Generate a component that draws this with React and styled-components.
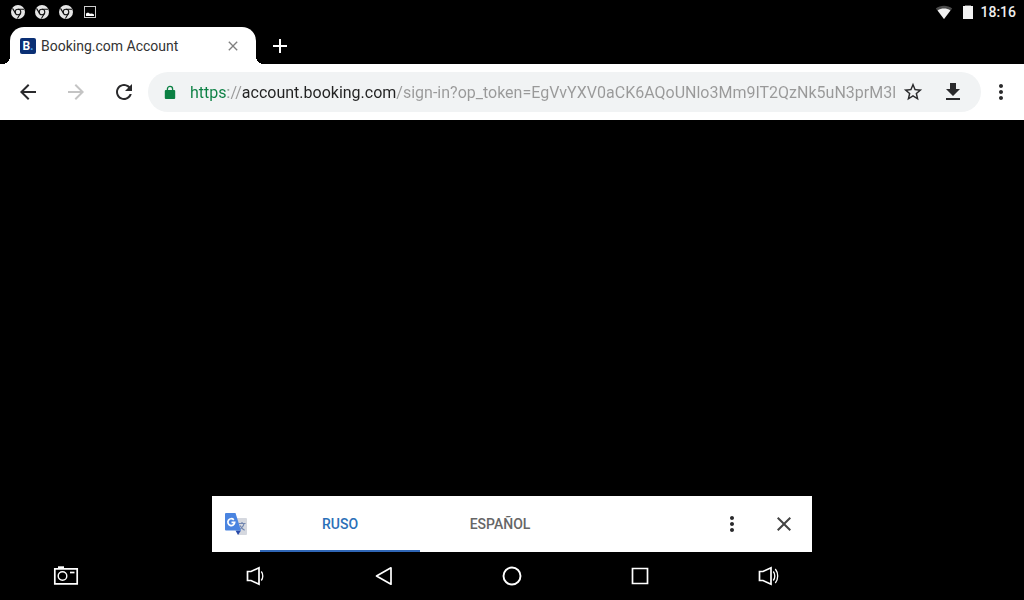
import { useState } from "react";
import styled, { createGlobalStyle } from "styled-components";

const URL_TEXT =
  "https://account.booking.com/sign-in?op_token=EgVvYXV0aCK6AQoUNlo3Mm9IT2QzNk5uN3prM3lpSk";

const icons = {
  back: "M20 11H7.83l5.59-5.59L12 4l-8 8 8 8 1.41-1.41L7.83 13H20v-2z",
  forward: "M12 4l-1.41 1.41L16.17 11H4v2h12.17l-5.58 5.59L12 20l8-8z",
  refresh:
    "M17.65 6.35C16.2 4.9 14.21 4 12 4c-4.42 0-7.99 3.58-7.99 8s3.57 8 7.99 8c3.73 0 6.84-2.55 7.73-6h-2.08c-.82 2.33-3.04 4-5.65 4-3.31 0-6-2.69-6-6s2.69-6 6-6c1.66 0 3.14.69 4.22 1.78L13 11h7V4l-2.35 2.35z",
  star: "M22 9.24l-7.19-.62L12 2 9.19 8.63 2 9.24l5.46 4.73L5.82 21 12 17.27 18.18 21l-1.63-7.03L22 9.24zM12 15.4l-3.76 2.27 1-4.28-3.32-2.88 4.38-.38L12 6.1l1.71 4.04 4.38.38-3.32 2.88 1 4.28L12 15.4z",
  download: "M19 9h-4V3H9v6H5l7 7 7-7zM5 18v2h14v-2H5z",
  more: "M12 8c1.1 0 2-.9 2-2s-.9-2-2-2-2 .9-2 2 .9 2 2 2zm0 2c-1.1 0-2 .9-2 2s.9 2 2 2 2-.9 2-2-.9-2-2-2zm0 6c-1.1 0-2 .9-2 2s.9 2 2 2 2-.9 2-2-.9-2-2-2z",
  close:
    "M19 6.41L17.59 5 12 10.59 6.41 5 5 6.41 10.59 12 5 17.59 6.41 19 12 13.41 17.59 19 19 17.59 13.41 12z",
  add: "M19 13h-6v6h-2v-6H5v-2h6V5h2v6h6v2z",
};

function Icon({ name, size = 24 }) {
  return (
    <svg width={size} height={size} viewBox="0 0 24 24" fill="currentColor" aria-hidden="true">
      <path d={icons[name]} />
    </svg>
  );
}

function ChromeIcon() {
  return (
    <svg width="14" height="14" viewBox="0 0 14 14" aria-hidden="true">
      <circle cx="7" cy="7" r="7" fill="#e6e6e6" />
      <g fill="none" stroke="#111" strokeWidth="1.1">
        <circle cx="7" cy="7" r="2.8" />
        <path d="M7 4.2h6M4.6 8.4 1.5 3.4M9.4 8.4 6.4 13.6" />
      </g>
    </svg>
  );
}

function PictureIcon() {
  return (
    <svg width="14" height="14" viewBox="0 0 14 14" aria-hidden="true">
      <rect x="1.5" y="1.5" width="11" height="11" fill="none" stroke="#ccc" />
      <path d="M3 11V8.6L5 7.4l2 1.3 2-.3 2 1V11z" fill="#fff" />
    </svg>
  );
}

function WifiIcon() {
  return (
    <svg width="18" height="14" viewBox="0 0 18 14" aria-hidden="true">
      <path d="M9 14 .8 3.4C5.4 0 12.6 0 17.2 3.4z" fill="#4a4a4a" />
      <path d="M9 14 2.6 5.4C6.2 3 11.8 3 15.4 5.4z" fill="#f2f2f2" />
    </svg>
  );
}

function BatteryIcon() {
  return (
    <svg width="10" height="14" viewBox="0 0 10 14" aria-hidden="true">
      <path d="M2 0h6v1H2z" fill="#666" />
      <path d="M0 1h10v13H0z" fill="#f2f2f2" />
    </svg>
  );
}

function LockIcon() {
  return (
    <svg width="12" height="14" viewBox="0 0 12 14" aria-hidden="true">
      <path d="M3.4 6V4a2.6 2.6 0 0 1 5.2 0v2" fill="none" stroke="#0b8043" strokeWidth="1.3" />
      <rect x=".8" y="5" width="10.4" height="9" rx="1" fill="#0b8043" />
    </svg>
  );
}

function TranslateLogo() {
  return (
    <svg width="24" height="24" viewBox="0 0 24 24" aria-hidden="true">
      <path d="M10 6h12a1 1 0 0 1 1 1v15a1 1 0 0 1-1 1h-8z" fill="#d5d8df" />
      <path
        d="M14.5 11.5h7M18 10v1.5M20 11.5c-.6 3-2.6 5-5 6.2M16 13.5c1 2 2.6 3.6 4.6 4.7"
        fill="none"
        stroke="#7286b0"
        strokeWidth="1.2"
      />
      <path d="M11.5 18.5H17L14 23z" fill="#2748a8" />
      <path d="M2 1h9.5L17 18.5H2a1 1 0 0 1-1-1V2a1 1 0 0 1 1-1z" fill="#4a84e0" />
      <path d="M9.8 7.8A3.4 3.4 0 1 0 10.7 10.4H7.5" fill="none" stroke="#fff" strokeWidth="1.7" />
    </svg>
  );
}

function NavIcon({ name }) {
  return (
    <svg width="26" height="24" viewBox="0 0 26 24" fill="none" stroke="#fff" strokeWidth="1.7" aria-hidden="true">
      {name === "camera" && (
        <>
          <path d="M1.8 4.8h22.4v15H1.8z" />
          <path d="M5 3.3h6" strokeWidth="2" />
          <circle cx="9.5" cy="12" r="4.3" strokeWidth="1.4" />
          <path d="M17 8.5h4.5" />
        </>
      )}
      {(name === "volumeDown" || name === "volumeUp") && (
        <>
          <path d="M4.5 7.5H8L16 3.8v16.4L8 16.5H4.5z" />
          <path d="M18.3 7.5c2 2.5 2 6.5 0 9" strokeWidth="1.3" />
        </>
      )}
      {name === "volumeUp" && <path d="M20.3 5c3.2 4 3.2 10 0 14" strokeWidth="1.3" />}
      {name === "back" && <path d="M5.5 12 20 3.8v16.4z" strokeLinejoin="round" />}
      {name === "home" && <circle cx="13" cy="12" r="8.5" strokeWidth="1.9" />}
      {name === "recent" && <path d="M5.5 4.5h15v15h-15z" />}
    </svg>
  );
}

export default function App() {
  const [url, setUrl] = useState(URL_TEXT);
  const [language, setLanguage] = useState("ruso");

  return (
    <>
      <GlobalStyle />
      <Screen>
        <StatusBar>
          <Notifications>
            <ChromeIcon />
            <ChromeIcon />
            <ChromeIcon />
            <PictureIcon />
          </Notifications>
          <SystemInfo>
            <WifiIcon />
            <BatteryIcon />
            <time>18:16</time>
          </SystemInfo>
        </StatusBar>

        <TabStrip>
          <BrowserTab>
            <Favicon>
              B<i>.</i>
            </Favicon>
            <TabTitle>Booking.com Account</TabTitle>
            <IconButton $width={46} $color="#808080" aria-label="Close tab">
              <Icon name="close" size={16} />
            </IconButton>
          </BrowserTab>
          <IconButton $width={48} $color="#fff" aria-label="New tab">
            <Icon name="add" />
          </IconButton>
        </TabStrip>

        <Toolbar>
          <IconButton $width={48} aria-label="Back">
            <Icon name="back" />
          </IconButton>
          <IconButton $width={48} $color="#c4c4c4" aria-label="Forward" disabled>
            <Icon name="forward" />
          </IconButton>
          <IconButton $width={48} aria-label="Reload">
            <Icon name="refresh" />
          </IconButton>
          <Omnibox>
            <LockIcon />
            <UrlInput
              aria-label="Address"
              spellCheck="false"
              value={url}
              onChange={(e) => setUrl(e.target.value)}
            />
            <IconButton $width={36} aria-label="Bookmark">
              <Icon name="star" size={22} />
            </IconButton>
            <IconButton $width={44} aria-label="Download">
              <Icon name="download" />
            </IconButton>
          </Omnibox>
          <IconButton $width={40} aria-label="Menu">
            <Icon name="more" />
          </IconButton>
        </Toolbar>

        <Page>
          <TranslateBar>
            <LogoSlot>
              <TranslateLogo />
            </LogoSlot>
            <Language $active={language === "ruso"} onClick={() => setLanguage("ruso")}>
              RUSO
            </Language>
            <Language $active={language === "es"} onClick={() => setLanguage("es")}>
              ESPAÑOL
            </Language>
            <TranslateActions>
              <IconButton $width={48} aria-label="Translate options">
                <Icon name="more" />
              </IconButton>
              <IconButton $width={56} $color="#444" aria-label="Close translate bar">
                <Icon name="close" />
              </IconButton>
            </TranslateActions>
          </TranslateBar>
        </Page>

        <SystemNav>
          <Screenshot aria-label="Screenshot">
            <NavIcon name="camera" />
          </Screenshot>
          <NavButton aria-label="Volume down">
            <NavIcon name="volumeDown" />
          </NavButton>
          <NavButton aria-label="System back">
            <NavIcon name="back" />
          </NavButton>
          <NavButton aria-label="Home">
            <NavIcon name="home" />
          </NavButton>
          <NavButton aria-label="Recent apps">
            <NavIcon name="recent" />
          </NavButton>
          <NavButton aria-label="Volume up">
            <NavIcon name="volumeUp" />
          </NavButton>
        </SystemNav>
      </Screen>
    </>
  );
}

const GlobalStyle = createGlobalStyle`
  * {
    box-sizing: border-box;
  }

  body {
    margin: 0;
    background: #000;
    font-family: Roboto, sans-serif;
  }

  button, input {
    border: 0;
    padding: 0;
    background: none;
    font: inherit;
  }

  svg {
    display: block;
    flex: none;
  }
`;

const Screen = styled.div`
  display: flex;
  flex-direction: column;
  min-height: 100vh;
  background: #000;
`;

const StatusBar = styled.header`
  display: flex;
  justify-content: space-between;
  align-items: center;
  height: 24px;
  padding: 0 8px 0 11px;
`;

const Notifications = styled.div`
  display: flex;
  align-items: center;
  gap: 10px;
`;

const SystemInfo = styled.div`
  display: flex;
  align-items: center;
  gap: 10px;
  color: #eee;
  font-size: 14px;
  font-weight: 500;
  line-height: 24px;

  time {
    margin-left: -3px;
  }
`;

const TabStrip = styled.div`
  display: flex;
  height: 40px;
  padding: 3px 0 0 10px;
`;

const BrowserTab = styled.div`
  position: relative;
  display: flex;
  align-items: center;
  width: 246px;
  padding-left: 10px;
  border-radius: 14px 14px 0 0;
  background: #fff;

  &::before,
  &::after {
    content: "";
    position: absolute;
    bottom: 0;
    width: 8px;
    height: 8px;
  }

  &::before {
    right: 100%;
    background: radial-gradient(circle at 0 0, transparent 8px, #fff 8px);
  }

  &::after {
    left: 100%;
    background: radial-gradient(circle at 100% 0, transparent 8px, #fff 8px);
  }
`;

const Favicon = styled.span`
  display: flex;
  justify-content: center;
  width: 16px;
  height: 16px;
  margin-right: 5px;
  border-radius: 2px;
  background: #0a2f74;
  color: #fff;
  font-size: 12px;
  font-weight: 700;
  line-height: 16px;

  i {
    color: #4aa3e8;
    font-style: normal;
  }
`;

const TabTitle = styled.span`
  flex: 1;
  color: #333;
  font-size: 14px;
  line-height: 20px;
  white-space: nowrap;
`;

const IconButton = styled.button`
  display: flex;
  flex: none;
  justify-content: center;
  align-items: center;
  width: ${({ $width }) => $width}px;
  color: ${({ $color }) => $color || "#2a2a2c"};
`;

const Toolbar = styled.div`
  display: flex;
  align-items: stretch;
  height: 56px;
  padding: 0 3px 0 4px;
  background: #fff;
`;

const Omnibox = styled.div`
  display: flex;
  flex: 1;
  align-items: center;
  min-width: 0;
  margin: 8px 0;
  padding: 0 6px 0 16px;
  border-radius: 20px;
  background: #f1f3f4;
`;

/* scheme, separator, host and path get their own colour */
const UrlInput = styled.input`
  flex: 1;
  min-width: 0;
  height: 28px;
  margin-left: 14px;
  padding-top: 1px;
  outline: 0;
  background: linear-gradient(
    to right,
    #0b8043 38px,
    #999 38px 52px,
    #222 52px 206px,
    #999 206px
  );
  -webkit-background-clip: text;
  background-clip: text;
  color: transparent;
  caret-color: #222;
  font-size: 16px;
`;

const Page = styled.main`
  display: flex;
  flex: 1;
  flex-direction: column;
  justify-content: flex-end;
  align-items: center;
`;

const TranslateBar = styled.section`
  display: flex;
  width: 100%;
  max-width: 600px;
  height: 56px;
  background: #fff;
`;

const LogoSlot = styled.div`
  display: flex;
  justify-content: center;
  align-items: center;
  width: 48px;
`;

const Language = styled.button`
  width: 160px;
  border-top: 2px solid transparent;
  border-bottom: 2px solid ${({ $active }) => ($active ? "#2f66b5" : "transparent")};
  color: ${({ $active }) => ($active ? "#2a6fb8" : "#666")};
  font-size: 14px;
  font-weight: 500;
`;

const TranslateActions = styled.div`
  display: flex;
  margin-left: auto;
`;

const SystemNav = styled.nav`
  display: grid;
  grid-template-columns: 1fr repeat(5, 12.5%) 1fr;
  height: 48px;
`;

const NavButton = styled.button`
  display: flex;
  justify-content: center;
  align-items: center;
`;

const Screenshot = styled(NavButton)`
  justify-content: flex-start;
  padding-left: 53px;
`;
